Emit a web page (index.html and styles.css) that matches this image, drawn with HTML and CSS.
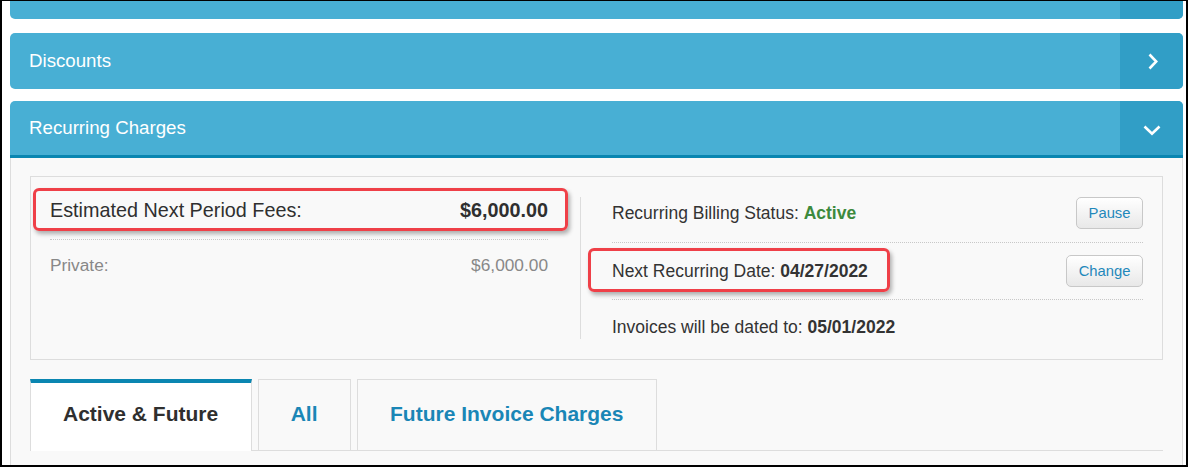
FILE: index.html
```html
<!DOCTYPE html>
<html lang="en">
<head>
<meta charset="utf-8">
<title>Recurring Charges</title>
<link rel="stylesheet" href="styles.css">
</head>
<body>
<div class="frame">
  <div class="panel panel-cut">
    <div class="panel-head head-cut">
      <span class="title"></span>
      <span class="toggle"></span>
    </div>
  </div>

  <div class="panel">
    <div class="panel-head">
      <span class="title">Discounts</span>
      <span class="toggle">
        <svg class="chev-right" viewBox="0 0 10 17" width="10" height="17" aria-hidden="true"><path d="M1.5 1.5 L8.3 8.5 L1.5 15.5" fill="none" stroke="#fff" stroke-width="2.6"/></svg>
      </span>
    </div>
  </div>

  <div class="panel panel-open">
    <div class="panel-head head-open">
      <span class="title">Recurring Charges</span>
      <span class="toggle">
        <svg class="chev-down" viewBox="0 0 18 11" width="18" height="11" aria-hidden="true"><path d="M1.5 1.5 L9 8.8 L16.5 1.5" fill="none" stroke="#fff" stroke-width="2.6"/></svg>
      </span>
    </div>
    <div class="panel-body">
      <div class="summary">
        <div class="col col-left">
          <div class="row row-total">
            <span>Estimated Next Period Fees:</span>
            <b>$6,000.00</b>
            <span class="mark mark-fees"></span>
          </div>
          <div class="row row-sub">
            <span>Private:</span>
            <span>$6,000.00</span>
          </div>
        </div>
        <div class="col col-right">
          <div class="row row-status">
            <span>Recurring Billing Status: <b class="ok">Active</b></span>
            <button class="btn" type="button">Pause</button>
          </div>
          <div class="row row-date">
            <span>Next Recurring Date: <b>04/27/2022</b></span>
            <button class="btn" type="button">Change</button>
            <span class="mark mark-date"></span>
          </div>
          <div class="row row-invoice">
            <span>Invoices will be dated to: <b>05/01/2022</b></span>
          </div>
        </div>
      </div>

      <div class="tabs">
        <div class="tab tab-active">Active &amp; Future</div>
        <div class="tab">All</div>
        <div class="tab">Future Invoice Charges</div>
      </div>
    </div>
  </div>
</div>
</body>
</html>
```

FILE: styles.css
```css
* { box-sizing: border-box; }

html, body {
  margin: 0;
  padding: 0;
  background: #fff;
}

body {
  font-family: "Liberation Sans", Arial, sans-serif;
  color: #333;
}

.frame {
  width: 1188px;
  height: 467px;
  overflow: hidden;
  border-top: 1px solid #000;
  border-left: 2px solid #000;
  border-right: 2px solid #000;
  border-bottom: 2px solid #000;
  background: #fff;
}

.panel {
  margin: 0 3px 12px 8px;
}

.panel-cut {
  margin-bottom: 14px;
}

.panel-head {
  display: flex;
  align-items: stretch;
  height: 56px;
  background: #48afd4;
  border-radius: 5px;
  overflow: hidden;
  color: #fff;
}

.head-cut {
  height: 18px;
  border-radius: 0 0 5px 5px;
}

.head-open {
  height: 57px;
  border-radius: 5px 5px 0 0;
  border-bottom: 3px solid #0a86b1;
}

.title {
  flex: 1;
  display: flex;
  align-items: center;
  padding-left: 19px;
  font-size: 18.7px;
}

.toggle {
  width: 63px;
  background: #319ec6;
  display: flex;
  align-items: center;
  justify-content: center;
}

.chev-right { margin-left: 3px; }
.chev-down { margin-top: 4px; }

.panel-open { margin-bottom: 0; }

.panel-body {
  background: #f9f9f9;
  border-left: 1px solid #ddd;
  border-right: 1px solid #ddd;
  padding: 18px 19px 20px;
  height: 320px;
}

.summary {
  display: flex;
  border: 1px solid #ddd;
  padding: 20px 19px 20px 19px;
}

.col-left {
  width: 498px;
  margin-right: 32px;
}

.col-right {
  flex: 1;
  border-left: 1px solid #ddd;
  padding-left: 31px;
}

.row {
  position: relative;
  display: flex;
  justify-content: space-between;
  align-items: center;
}

.row-total {
  font-size: 19.8px;
  line-height: 26px;
  padding-bottom: 16px;
  border-bottom: 1px dotted #c8c8c8;
  color: #2f2f2f;
}

.row-sub {
  font-size: 17.3px;
  line-height: 24px;
  padding-top: 13px;
  color: #888;
}

.col-right .row {
  font-size: 17.5px;
  line-height: 24px;
}

.row-status {
  height: 46px;
  padding-bottom: 13px;
  border-bottom: 1px dotted #c8c8c8;
}

.row-date {
  height: 57px;
  padding: 12px 0;
  border-bottom: 1px dotted #c8c8c8;
}

.row-invoice {
  padding-top: 15px;
}

.ok { color: #3d8a3d; }

.btn {
  height: 32px;
  padding: 0 11.5px;
  font-family: "Liberation Sans", Arial, sans-serif;
  font-size: 14.8px;
  color: #1f88bb;
  background: linear-gradient(#ffffff, #e8e8e8);
  border: 1px solid #c8c8c8;
  border-radius: 5px;
}

.mark {
  position: absolute;
  border: 3px solid #ef4048;
  border-radius: 6px;
  box-shadow: 2px 3px 4px rgba(0, 0, 0, 0.3);
  pointer-events: none;
}

.mark-fees {
  left: -17px;
  top: -9px;
  width: 535px;
  height: 43px;
}

.mark-date {
  left: -24px;
  top: 5px;
  width: 302px;
  height: 44px;
}

.tabs {
  display: flex;
  gap: 6px;
  margin-top: 19px;
  border-bottom: 1px solid #ddd;
  height: 72px;
}

.tab {
  height: 71px;
  padding: 22px 32.5px 0 32px;
  border: 1px solid #ddd;
  border-bottom: none;
  font-size: 21px;
  line-height: 24px;
  font-weight: bold;
  color: #1a86b6;
}

.tab-active {
  height: 72px;
  padding-top: 19px;
  border-top: 4px solid #0a86b1;
  background: #fff;
  color: #2f2f2f;
}
```
